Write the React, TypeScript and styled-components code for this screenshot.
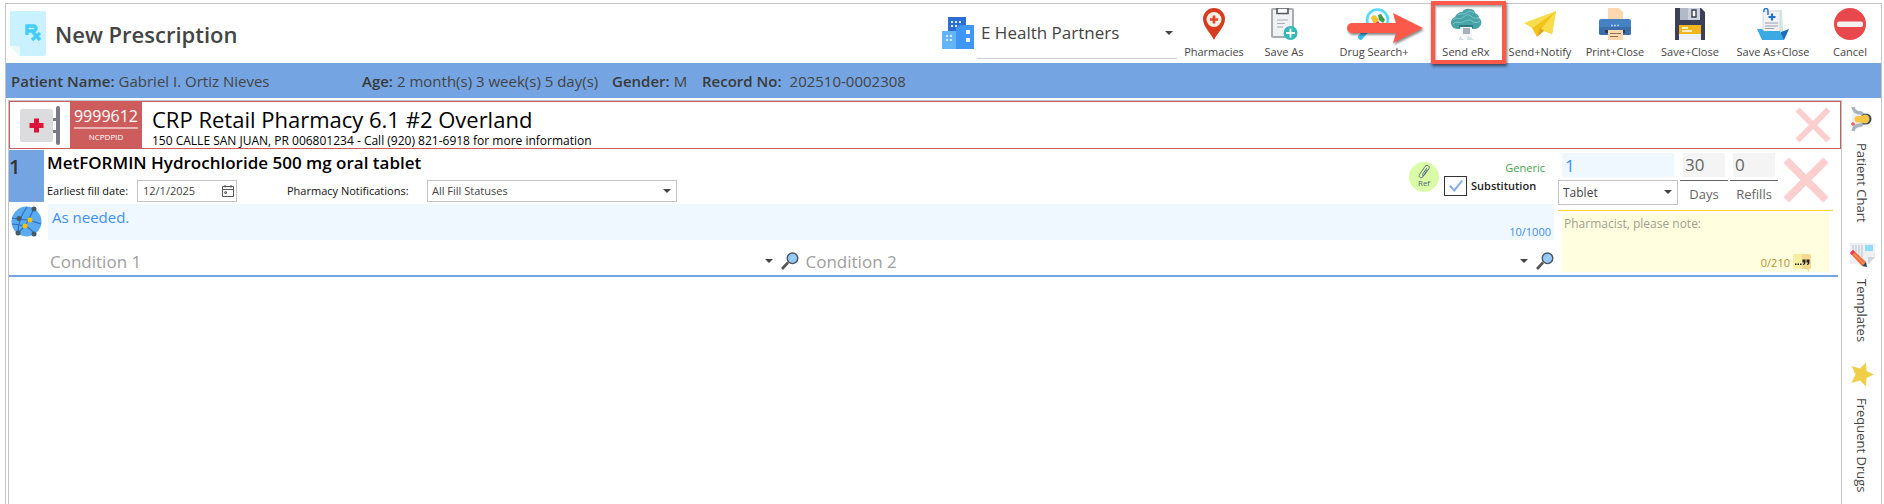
import React from "react";
import styled, { createGlobalStyle } from "styled-components";

const GlobalStyle = createGlobalStyle`
  *, *::before, *::after { box-sizing: border-box; }
  body {
    margin: 0;
    background: #fff;
    color: #444;
    font-family: "Open Sans", "Noto Sans", sans-serif;
    font-size: 11px;
    line-height: 16px;
  }
  button, input, select, textarea {
    font: inherit;
    color: inherit;
    margin: 0;
    padding: 0;
    border: 0;
    border-radius: 0;
    background: none;
    outline: none;
  }
  button { cursor: pointer; }
  svg { display: block; flex: none; }
`;

/* ---------- window ---------- */

const Page = styled.div`
  min-height: 100vh;
  padding: 3px 2px 0 5px;
  display: flex;
`;
const Frame = styled.div`
  flex: 1;
  min-width: 0;
  display: flex;
  flex-direction: column;
  border: 1px solid #c4c4c4;
  border-bottom: 0;
`;
const Header = styled.header`
  height: 59px;
  display: flex;
  align-items: flex-start;
  justify-content: space-between;
`;
const TitleGroup = styled.div`
  display: flex;
  align-items: center;
  gap: 9px;
  padding: 7px 0 0 4px;
`;
const Title = styled.h1`
  margin: 0;
  font-size: 22px;
  line-height: 32px;
  font-weight: 600;
`;
const HeaderTools = styled.div`
  display: flex;
  align-items: flex-start;
`;
const Facility = styled.label`
  display: flex;
  gap: 3px;
  padding: 12px 2px 0 0;
`;
const FacilityField = styled.div`
  width: 200px;
  height: 43px;
  padding: 5px 0 0 4px;
  border-bottom: 1px solid #d0d0d0;
`;
const Toolbar = styled.nav`
  display: flex;
`;
const ToolButton = styled.button<{ $width: number }>`
  position: relative;
  width: ${(p) => p.$width}px;
  display: flex;
  flex-direction: column;
  align-items: center;
  gap: 4px;
  padding-top: 4px;
  white-space: nowrap;
`;
const Highlight = styled.span`
  position: absolute;
  top: -3px;
  left: 2px;
  width: 75px;
  height: 63px;
  border: 4px solid #fb5a4a;
  box-shadow: 1px 2px 3px rgba(0, 0, 0, 0.6), inset 1px 2px 2px rgba(0, 0, 0, 0.35);
  pointer-events: none;
`;
const Arrow = styled.svg`
  position: absolute;
  top: 8px;
  left: -83px;
  filter: drop-shadow(1px 2px 1px rgba(0, 0, 0, 0.45));
  pointer-events: none;
`;

/* ---------- patient bar ---------- */

const PatientBar = styled.dl`
  margin: 0;
  height: 35px;
  padding-left: 5px;
  display: flex;
  align-items: center;
  background: #74a5e2;
  font-size: 15px;
  white-space: nowrap;
`;
const Fact = styled.div<{ $width: number; $gap?: number }>`
  display: flex;
  gap: ${(p) => p.$gap ?? 4}px;
  min-width: ${(p) => p.$width}px;
  dt { font-weight: 600; color: #3a3a3a; }
  dd { margin: 0; }
`;

/* ---------- body ---------- */

const Body = styled.div`
  flex: 1;
  display: flex;
  padding: 2px 0 0 2px;
`;
const Panel = styled.main`
  flex: 1;
  min-width: 0;
  border: 1px solid #c4c4c4;
  border-bottom: 0;
`;
const SideBar = styled.aside`
  width: 39px;
  display: flex;
  flex-direction: column;
  align-items: center;
  gap: 20px;
  padding: 6px 0 0 1px;
`;
const SideTab = styled.button`
  display: flex;
  flex-direction: column;
  align-items: center;
  gap: 11px;
  span {
    writing-mode: vertical-rl;
    font-size: 13px;
    line-height: 18px;
    white-space: nowrap;
  }
`;

/* ---------- pharmacy card ---------- */

const PharmacyCard = styled.section`
  height: 48px;
  display: flex;
  border: 1px solid #cd5c5c;
  color: #000;
`;
const PharmacySign = styled.div`
  width: 60px;
  padding: 4px 0 0 10px;
`;
const PharmacyId = styled.div`
  width: 72px;
  background: #cd5c5c;
  color: #fff;
  display: flex;
  flex-direction: column;
  align-items: center;
`;
const IdNumber = styled.span`
  font-size: 16px;
  line-height: 22px;
  padding-top: 3px;
  border-bottom: 2px solid #ebb4b4;
`;
const IdCaption = styled.span`
  font-size: 8px;
  line-height: 16px;
`;
const PharmacyText = styled.div`
  flex: 1;
  padding: 2px 0 0 10px;
  white-space: nowrap;
`;
const PharmacyName = styled.h2`
  margin: 0;
  font-size: 22px;
  line-height: 30px;
  font-weight: 400;
`;
const PharmacyAddress = styled.div`
  font-size: 12px;
  line-height: 13px;
`;
const RemovePharmacy = styled.button`
  padding: 0 9px;
`;

/* ---------- medication ---------- */

const Medication = styled.section`
  display: flex;
  gap: 4px;
  margin: 1px 3px 0 0;
  height: 127px;
  border-bottom: 2px solid #74a5e2;
`;
const MedMain = styled.div`
  flex: 1;
  min-width: 0;
`;
const MedTop = styled.div`
  display: flex;
  height: 52px;
`;
const MedNumber = styled.div`
  width: 35px;
  padding-top: 6px;
  background: #74a5e2;
  color: #333;
  font-size: 20px;
  line-height: 22px;
  font-weight: 600;
`;
const MedDetails = styled.div`
  flex: 1;
  padding-left: 3px;
`;
const MedName = styled.h3`
  margin: 0;
  color: #000;
  font-size: 17px;
  line-height: 26px;
  font-weight: 600;
`;
const FilterRow = styled.div`
  display: flex;
  align-items: center;
  height: 22px;
  margin-top: 4px;
  label { color: #111; }
`;
const FilterLabel = styled.label<{ $width: number }>`
  width: ${(p) => p.$width}px;
`;
const DateBox = styled.div`
  width: 100px;
  height: 22px;
  margin-right: 50px;
  padding: 0 2px 0 5px;
  display: flex;
  align-items: center;
  border: 1px solid #c4c4c4;
  input { flex: 1; width: 0; }
`;
const SelectBox = styled.div<{ $width?: number; $height: number; $border?: boolean; $size?: number }>`
  width: ${(p) => (p.$width ? `${p.$width}px` : "100%")};
  height: ${(p) => p.$height}px;
  border: ${(p) => (p.$border ? "1px solid #c4c4c4" : "0")};
  font-size: ${(p) => p.$size ?? 11}px;
  display: grid;
  align-items: center;
  > * { grid-area: 1 / 1; }
  select {
    appearance: none;
    width: 100%;
    height: 100%;
    padding-left: ${(p) => (p.$border ? 4 : 0)}px;
  }
  svg { justify-self: end; margin-right: ${(p) => (p.$border ? 5 : 4)}px; pointer-events: none; }
`;
const RefButton = styled.button`
  width: 30px;
  height: 30px;
  margin: 12px 5px 0 0;
  border-radius: 50%;
  background: #dbfca6;
  color: #4a6a7c;
  display: flex;
  flex-direction: column;
  align-items: center;
  padding-top: 2px;
  span { font-size: 8px; line-height: 8px; }
`;
const Substitution = styled.div`
  width: 110px;
  padding-top: 10px;
`;
const Generic = styled.div`
  padding-right: 9px;
  text-align: right;
  color: #3fa64a;
`;
const CheckLabel = styled.label`
  display: flex;
  align-items: center;
  gap: 4px;
  height: 20px;
  color: #222;
  font-weight: 600;
`;
const CheckBox = styled.span`
  width: 23px;
  height: 20px;
  display: grid;
  place-items: center;
  > * { grid-area: 1 / 1; }
  input {
    appearance: none;
    width: 23px;
    height: 20px;
    border: 1px solid #333;
  }
  svg { visibility: hidden; pointer-events: none; }
  input:checked + svg { visibility: visible; }
`;

const SigRow = styled.div`
  display: flex;
  margin-top: 2px;
  height: 36px;
`;
const SigIcon = styled.button`
  width: 39px;
  padding: 2px 0 0 2px;
  display: flex;
`;
const NoteField = styled.div<{ $tone: "blue" | "yellow" }>`
  flex: 1;
  display: grid;
  background: ${(p) => (p.$tone === "blue" ? "#eff7ff" : "#ffffe0")};
  color: ${(p) => (p.$tone === "blue" ? "#4090f0" : "#b8902a")};
  > * { grid-area: 1 / 1; }
  textarea {
    width: 100%;
    height: 100%;
    resize: none;
    overflow: hidden;
    padding: ${(p) => (p.$tone === "blue" ? "4px" : "2px")};
    font-size: ${(p) => (p.$tone === "blue" ? 15 : 12)}px;
    line-height: 18px;
  }
  textarea::placeholder { color: #a0a090; opacity: 1; }
`;
const Counter = styled.div<{ $inset: number }>`
  place-self: end;
  display: flex;
  align-items: center;
  gap: 3px;
  padding-right: ${(p) => p.$inset}px;
  pointer-events: none;
`;
const ConditionRow = styled.div`
  display: flex;
  gap: 5px;
  height: 35px;
  padding: 7px 0 0 39px;
`;
const Condition = styled.div`
  flex: 1;
  display: flex;
  align-items: center;
  height: 28px;
  padding-left: 2px;
  gap: 8px;
  input { flex: 1; width: 0; font-size: 17px; }
  input::placeholder { color: #a0a0a0; opacity: 1; }
`;

const Dispense = styled.div`
  width: 280px;
  padding-top: 3px;
`;
const DispenseTop = styled.div`
  display: flex;
  gap: 2px;
  height: 53px;
`;
const Quantity = styled.div`
  width: 120px;
`;
const QuantityInput = styled.input`
  display: block;
  width: 112px;
  height: 24px;
  margin: 0 4px 3px;
  padding-left: 3px;
  background: #eff7ff;
  color: #4090f0;
  font-size: 17px;
`;
const CountField = styled.label`
  width: 48px;
  display: flex;
  flex-direction: column;
  align-items: center;
  color: #666;
  font-size: 13px;
  line-height: 26px;
  input {
    width: 42px;
    height: 24px;
    padding-left: 2px;
    background: #f4f4f4;
    font-size: 17px;
  }
  span {
    width: 100%;
    margin-top: 3px;
    border-top: 1px solid #666;
    text-align: center;
  }
`;
const RemoveMed = styled.button`
  padding: 0 0 0 3px;
`;
const PharmacistNote = styled.div`
  margin: 4px 5px 0 0;
  border-top: 1px solid #ffd21e;
  padding: 2px 4px 0;
  display: flex;
  height: 62px;
`;

/* ---------- icons ---------- */

const Caret = () => (
  <svg width="8" height="5" viewBox="0 0 8 5"><path d="M0 0h8L4 4z" fill="#444" /></svg>
);
const Cross = ({ size }: { size: number }) => (
  <svg width={size} height={size} viewBox="0 0 36 36">
    <path d="M2.500 2.500 33.500 33.500M33.500 2.500 2.500 33.500" stroke="#fccfcf" strokeWidth="6" />
  </svg>
);
const Magnifier = () => (
  <svg width="18" height="18" viewBox="0 0 18 18">
    <path d="M1 17 7 10.500" stroke="#555" strokeWidth="2.600" />
    <circle cx="11.500" cy="6.300" r="5.300" fill="#93c8ff" stroke="#4d545c" strokeWidth="1.400" />
    <path d="M9 9l5-5.500" stroke="#b9dcff" strokeWidth="1" />
  </svg>
);
const RxPage = () => (
  <svg width="36" height="45" viewBox="0 0 36 45">
    <path d="M2 0h32a2 2 0 0 1 2 2v41a2 2 0 0 1-2 2H10L0 35V2a2 2 0 0 1 2-2z" fill="#caf1ff" />
    <path d="M0 35h8a2 2 0 0 1 2 2v8z" fill="#e8f9ff" />
    <path d="M17 24V15h6.500a2.500 2.500 0 0 1 0 5H17M22 20l8 9M30 22l-8 7" fill="none" stroke="#46cdfc" strokeWidth="3.400" />
  </svg>
);
const Buildings = () => (
  <svg width="32" height="34" viewBox="0 0 32 34">
    <path d="M6 1h18v32H6z" fill="#2d6fd0" />
    <path d="M0 15h14v18H0z" fill="#64b5f6" />
    <path d="M14 12l4-3h14v24H14z" fill="#3f96f4" />
    <path d="M9 5h2v2H9zm4 0h2v2h-2zm4 0h2v2h-2zM9 9h2v2H9zm4 0h2v2h-2zM4 19h2v2H4zm4 0h2v2H8zM4 23h2v2H4zm4 0h2v2H8z" fill="#d8ecff" />
    <path d="M24 14h4v4h-4zm0 8h4v4h-4z" fill="#f4faff" />
  </svg>
);
const Pin = () => (
  <svg width="32" height="32" viewBox="0 0 32 32">
    <path d="M16 32C13 25 5 19 5 11a11 11 0 0 1 22 0c0 8-8 14-11 21z" fill="#d63b20" />
    <circle cx="16" cy="11.500" r="7.500" fill="#f5efe4" />
    <path d="M16 7.500v8M12 11.500h8" stroke="#e8432a" strokeWidth="2.600" />
  </svg>
);
const Clipboard = () => (
  <svg width="32" height="32" viewBox="0 0 32 32">
    <rect x="4" y="1" width="21" height="28" rx="1" fill="#f0f1f3" stroke="#a9adb3" strokeWidth="2" />
    <path d="M9 0h11v5.500H9z" fill="#fff" stroke="#53565c" strokeWidth="1.600" />
    <path d="M9 12h11M9 15.500h8M9 19h6" stroke="#a9adb3" strokeWidth="1.200" />
    <circle cx="22.500" cy="25" r="7" fill="#35b8b8" />
    <path d="M22.500 20.500v9M18 25h9" stroke="#fff" strokeWidth="1.800" />
  </svg>
);
const DrugSearch = () => (
  <svg width="32" height="32" viewBox="0 0 32 32">
    <path d="M1 31 9 22" stroke="#3bbdf0" strokeWidth="5" />
    <circle cx="19.500" cy="12" r="10.500" fill="#eefaff" stroke="#5ad7fb" strokeWidth="2.600" />
    <path d="M13 10a3 3 0 0 1 5-2l3 4-5 4z" fill="#f4c22e" />
    <path d="M20 7l3-1 4 6-2 3-4-3z" fill="#3f9b46" />
    <path d="M15 17l5-4 3 4z" fill="#e8323c" />
  </svg>
);
const CloudSend = () => (
  <svg width="32" height="32" viewBox="0 0 32 32">
    <path d="M7 21a6 6 0 0 1-6-6c0-3 1-5 4-6 1-3 4-5 7-5 2-3 5-4 8-3 3 0 5 2 5 4 3 1 4 3 4 5 3 2 3 6 1 8-1 2-3 3-5 3z" fill="#47a3a7" />
    <path d="M3 12c3-4 6 0 9-2s6-5 9-2 5 2 8 2M3 16c4-4 6 0 10-2s6-3 9-1 5 2 8 0M8 7c3-2 5 0 8-2s5-2 8 0" fill="none" stroke="#7cc6c9" strokeWidth="1" />
    <path d="M9 17h14v3H9z" fill="#2b7d82" />
    <path d="M10 19h12v12h-6l-4-3z" fill="#f1f3f4" />
    <path d="M13 20h7v6h-7z" fill="#a6b2ba" />
    <path d="M10 28l4 4h-5zM18 28l6 4h-7z" fill="#cfe3e4" />
  </svg>
);
const PaperPlane = () => (
  <svg width="32" height="32" viewBox="0 0 32 32">
    <path d="M32 3 0 15l8 5z" fill="#f8dc4c" />
    <path d="M32 3 8 20l5 9 4-7 11 4z" fill="#f0c419" />
    <path d="M32 3 17 21l11 5z" fill="#f8dc4c" />
    <path d="M13 29l3-9 4 3z" fill="#e0a31a" />
  </svg>
);
const Printer = () => (
  <svg width="32" height="32" viewBox="0 0 32 32">
    <path d="M9 0h11l4 4v9H9z" fill="#fdd7ad" />
    <path d="M2 11h28a2 2 0 0 1 2 2v12a2 2 0 0 1-2 2H2a2 2 0 0 1-2-2V13a2 2 0 0 1 2-2z" fill="#4482c3" />
    <path d="M0 19h32v6a2 2 0 0 1-2 2H2a2 2 0 0 1-2-2z" fill="#3a6fa9" />
    <path d="M6 22h20v3H6z" fill="#2c3e50" />
    <path d="M9 22h15v10H9z" fill="#fdd7ad" />
    <path d="M11 25.500h11M11 28.500h8" stroke="#8a7460" strokeWidth="1" />
    <path d="M12 17.500h9" stroke="#a9cdf0" strokeWidth="1.500" strokeDasharray="2 1" />
  </svg>
);
const Floppy = () => (
  <svg width="32" height="32" viewBox="0 0 32 32">
    <path d="M1 0h26l4 4v28H1z" fill="#3b3f58" />
    <path d="M6 0h20v12H6z" fill="#cdd3dc" />
    <path d="M18 2h4v7h-4z" fill="#fff" stroke="#3b3f58" strokeWidth="1.400" />
    <path d="M6 0h8v12H6z" fill="#b3bac7" />
    <path d="M5 17h22v9H5z" fill="#f2b61c" />
    <path d="M5 26h22v6H5z" fill="#eef1f4" />
    <path d="M8 20h6M8 23h10" stroke="#fff" strokeWidth="1.400" />
  </svg>
);
const Folder = () => (
  <svg width="32" height="32" viewBox="0 0 32 32">
    <path d="M8 4l17-2 1 22H8z" fill="#cdeadd" />
    <path d="M6 3h17v21H6z" fill="#f0f2f5" stroke="#d5d9de" />
    <path d="M7 4C6 0 11-1 11 3v4" fill="none" stroke="#2f74c4" strokeWidth="1.500" />
    <path d="M15 5.500v7M11.500 9h7" stroke="#2472c8" strokeWidth="2.200" />
    <path d="M8 15h13M8 18h13M8 20.500h9" stroke="#9aa0a8" strokeWidth="1" />
    <path d="M24 24l8-3-5 11h-6z" fill="#1f6db8" />
    <path d="M0 21h5l2 2h16l4 9H5z" fill="#3ba9e2" />
  </svg>
);
const NoEntry = () => (
  <svg width="32" height="32" viewBox="0 0 32 32">
    <circle cx="16" cy="16" r="16" fill="#e8474b" />
    <rect x="3" y="13.500" width="26" height="5.500" rx="2" fill="#f3f1f1" />
  </svg>
);
const PharmacyBoard = () => (
  <svg width="40" height="39" viewBox="0 0 40 39">
    <path d="M32 12h6v3h-6zm0 12h6v3h-6z" fill="#7a7a86" />
    <rect x="36" y="0" width="4" height="39" rx="2" fill="#7a7a86" />
    <rect x="0" y="3" width="33" height="33" rx="2" fill="#dcdcde" />
    <path d="M16.500 12.500v14M9.500 19.500h14" stroke="#dc143c" strokeWidth="5" />
  </svg>
);
const Network = () => (
  <svg width="31" height="31" viewBox="0 0 31 31">
    <circle cx="15.500" cy="15.500" r="15" fill="#5aaaf0" />
    <path d="M1 12c8 2 12 2 17 2M23 2c-3 8-6 12-9 18M7 27c0-9 3-18 9-26M14 20c6 3 8 5 9 8M1 18c6 0 9 1 13 2M18 14l12 4M7 27l7-7" fill="none" stroke="#2d6fc0" strokeWidth="1.200" />
    <g fill="#455a64">
      <circle cx="23" cy="3" r="2.500" /><circle cx="8" cy="12.500" r="2.500" />
      <circle cx="7" cy="27" r="2.500" /><circle cx="23" cy="28" r="2.500" />
    </g>
    <circle cx="19" cy="14" r="2.500" fill="#ffc107" /><circle cx="14" cy="20" r="2.500" fill="#ffc107" />
  </svg>
);
const Calendar = () => (
  <svg width="12" height="12" viewBox="0 0 12 12" fill="none" stroke="#555">
    <path d="M.5 1.500h11v10H.5zM.5 4.500h11M3 0v2.500M9 0v2.500" /><path d="M2.800 6.800h1.600v1.600H2.800z" />
  </svg>
);
const Clip = () => (
  <svg width="14" height="15" viewBox="0 0 14 15" fill="none" stroke="#4a6a7c" strokeWidth="0.900" strokeLinecap="round">
    <path d="M10 6 6 12.500c-2 2.500-5 .5-3.500-2L8 2.500c1.500-2.500 5.500-.5 4 2L7.500 11c-1 1.500-2.500.5-1.800-.8L9.500 4.500" />
  </svg>
);
const Tick = () => (
  <svg width="16" height="14" viewBox="0 0 16 14"><path d="M1 7.500 3 6l3 4L13.500 1 15 2 6.500 13z" fill="#84aee6" /></svg>
);
const QuoteBubble = () => (
  <svg width="18" height="18" viewBox="0 0 18 18">
    <path d="M2 0h7v15H2a2 2 0 0 1-2-2V2a2 2 0 0 1 2-2z" fill="#f6f0a0" />
    <path d="M9 0h7a2 2 0 0 1 2 2v11a2 2 0 0 1-2 2v3l-3-3H9z" fill="#f3da8e" />
    <path d="M2 9.500h1.500V11H2zm2.500 0H6V11H4.500zm2.500 0h1.500V11H7z" fill="#222" />
    <path d="M9.500 5.500h3V8c0 2-1 3-2.500 3v-1c.8-.3 1-.8 1-1.500H9.500zm4 0h3V8c0 2-1 3-2.500 3v-1c.8-.3 1-.8 1-1.500h-1.500z" fill="#222" />
  </svg>
);
const PatientIcon = () => (
  <svg width="25" height="26" viewBox="0 0 25 26">
    <path d="M3 5h8v17H1z" fill="#f0f0f2" />
    <path d="M3 1c1 5 4 6 8 6l4 3M3 25c1-5 4-6 8-6l4-3" fill="none" stroke="#aab4bf" strokeWidth="3.500" />
    <circle cx="16" cy="13" r="5.500" fill="#34495e" />
    <path d="M6 10h5l4-1.500a4.500 4.500 0 0 1 0 9l-4-1H6c-2-2-2-5 0-6.500z" fill="#fcc644" />
    <path d="M3 16v4M1 18h4" stroke="#f05a5a" strokeWidth="1.300" />
  </svg>
);
const TemplatesIcon = () => (
  <svg width="25" height="25" viewBox="0 0 25 25">
    <path d="M0 0h25v15l-6 6H0z" fill="#eef0f3" />
    <path d="M25 14l-7 7v-7z" fill="#cdd5df" />
    <path d="M3 2v8M6 2v12M9 2v13M12 2v12" stroke="#c3ccd6" strokeWidth="1.300" />
    <path d="M15 2h8v6h-8z" fill="#8fdcfb" />
    <path d="M0 10 3 7l13 12-4 4z" fill="#f5683c" />
    <path d="M1.500 8.500 14 21" stroke="#fb9a5a" strokeWidth="1.200" />
    <path d="M16 19l1 5-5-1z" fill="#34495e" />
    <path d="M0 10 3 7l2 2-3 3z" fill="#f0385a" />
  </svg>
);
const StarIcon = () => (
  <svg width="25" height="25" viewBox="0 0 25 25">
    <path d="M24 12.500 16.500 16 16 24.500 10 18.500 1.500 21 5.500 12.500 1.500 4 10 6.500 16 .5 16.500 9z" fill="#efce4a" />
  </svg>
);

const TOOLS = [
  { label: "Pharmacies", width: 70, Icon: Pin },
  { label: "Save As", width: 70, Icon: Clipboard },
  { label: "Drug Search+", width: 110, Icon: DrugSearch },
  { label: "Send eRx", width: 74, Icon: CloudSend, highlighted: true },
  { label: "Send+Notify", width: 74, Icon: PaperPlane },
  { label: "Print+Close", width: 76, Icon: Printer },
  { label: "Save+Close", width: 74, Icon: Floppy },
  { label: "Save As+Close", width: 92, Icon: Folder },
  { label: "Cancel", width: 62, Icon: NoEntry },
];

const SIDE_TABS = [
  { label: "Patient Chart", Icon: PatientIcon },
  { label: "Templates", Icon: TemplatesIcon },
  { label: "Frequent Drugs", Icon: StarIcon },
];

export default function App() {
  return (
    <Page>
      <GlobalStyle />
      <Frame>
        <Header>
          <TitleGroup>
            <RxPage />
            <Title>New Prescription</Title>
          </TitleGroup>
          <HeaderTools>
            <Facility htmlFor="facility">
              <Buildings />
              <FacilityField>
                <SelectBox $height={24} $size={17}>
                  <select id="facility" aria-label="Facility"><option>E Health Partners</option></select>
                  <Caret />
                </SelectBox>
              </FacilityField>
            </Facility>
            <Toolbar>
              {TOOLS.map(({ label, width, Icon, highlighted }) => (
                <ToolButton key={label} type="button" $width={width}>
                  <Icon />
                  <span>{label}</span>
                  {highlighted && (
                    <>
                      <Highlight />
                      <Arrow width="78" height="34" viewBox="0 0 78 34">
                        <path d="M6 11H50L47 1 77 16 47 31 50 21H6a5 5 0 0 1 0-10z" fill="#fb5a4a" />
                      </Arrow>
                    </>
                  )}
                </ToolButton>
              ))}
            </Toolbar>
          </HeaderTools>
        </Header>

        <PatientBar>
          <Fact $width={351}><dt>Patient Name:</dt><dd>Gabriel I. Ortiz Nieves</dd></Fact>
          <Fact $width={250}><dt>Age:</dt><dd>2 month(s) 3 week(s) 5 day(s)</dd></Fact>
          <Fact $width={90}><dt>Gender:</dt><dd>M</dd></Fact>
          <Fact $width={210} $gap={8}><dt>Record No:</dt><dd>202510-0002308</dd></Fact>
        </PatientBar>

        <Body>
          <Panel>
            <PharmacyCard>
              <PharmacySign><PharmacyBoard /></PharmacySign>
              <PharmacyId>
                <IdNumber>9999612</IdNumber>
                <IdCaption>NCPDPID</IdCaption>
              </PharmacyId>
              <PharmacyText>
                <PharmacyName>CRP Retail Pharmacy 6.1 #2 Overland</PharmacyName>
                <PharmacyAddress>
                  150 CALLE SAN JUAN, PR 006801234 - Call (920) 821-6918 for more information
                </PharmacyAddress>
              </PharmacyText>
              <RemovePharmacy type="button" aria-label="Remove pharmacy"><Cross size={36} /></RemovePharmacy>
            </PharmacyCard>

            <Medication>
              <MedMain>
                <MedTop>
                  <MedNumber>1</MedNumber>
                  <MedDetails>
                    <MedName>MetFORMIN Hydrochloride 500 mg oral tablet</MedName>
                    <FilterRow>
                      <FilterLabel $width={90} htmlFor="fill-date">Earliest fill date:</FilterLabel>
                      <DateBox>
                        <input id="fill-date" defaultValue="12/1/2025" />
                        <Calendar />
                      </DateBox>
                      <FilterLabel $width={140} htmlFor="notifications">Pharmacy Notifications:</FilterLabel>
                      <SelectBox $width={250} $height={22} $border>
                        <select id="notifications"><option>All Fill Statuses</option></select>
                        <Caret />
                      </SelectBox>
                    </FilterRow>
                  </MedDetails>
                  <RefButton type="button"><Clip /><span>Ref</span></RefButton>
                  <Substitution>
                    <Generic>Generic</Generic>
                    <CheckLabel>
                      <CheckBox><input type="checkbox" defaultChecked /><Tick /></CheckBox>
                      Substitution
                    </CheckLabel>
                  </Substitution>
                </MedTop>

                <SigRow>
                  <SigIcon type="button" aria-label="Sig builder"><Network /></SigIcon>
                  <NoteField $tone="blue">
                    <textarea aria-label="Directions" defaultValue="As needed." />
                    <Counter $inset={3}>10/1000</Counter>
                  </NoteField>
                </SigRow>

                <ConditionRow>
                  {["Condition 1", "Condition 2"].map((name) => (
                    <Condition key={name}>
                      <input aria-label={name} placeholder={name} />
                      <button type="button" aria-label={`Open ${name} list`}><Caret /></button>
                      <button type="button" aria-label={`Search ${name}`}><Magnifier /></button>
                    </Condition>
                  ))}
                </ConditionRow>
              </MedMain>

              <Dispense>
                <DispenseTop>
                  <Quantity>
                    <QuantityInput aria-label="Quantity" defaultValue="1" />
                    <SelectBox $width={120} $height={25} $size={12} $border>
                      <select aria-label="Unit"><option>Tablet</option></select>
                      <Caret />
                    </SelectBox>
                  </Quantity>
                  <CountField><input defaultValue="30" /><span>Days</span></CountField>
                  <CountField><input defaultValue="0" /><span>Refills</span></CountField>
                  <RemoveMed type="button" aria-label="Remove medication"><Cross size={46} /></RemoveMed>
                </DispenseTop>
                <PharmacistNote>
                  <NoteField $tone="yellow">
                    <textarea aria-label="Note to pharmacist" placeholder="Pharmacist, please note:" />
                    <Counter $inset={18}>0/210 <QuoteBubble /></Counter>
                  </NoteField>
                </PharmacistNote>
              </Dispense>
            </Medication>
          </Panel>

          <SideBar>
            {SIDE_TABS.map(({ label, Icon }) => (
              <SideTab key={label} type="button"><Icon /><span>{label}</span></SideTab>
            ))}
          </SideBar>
        </Body>
      </Frame>
    </Page>
  );
}
